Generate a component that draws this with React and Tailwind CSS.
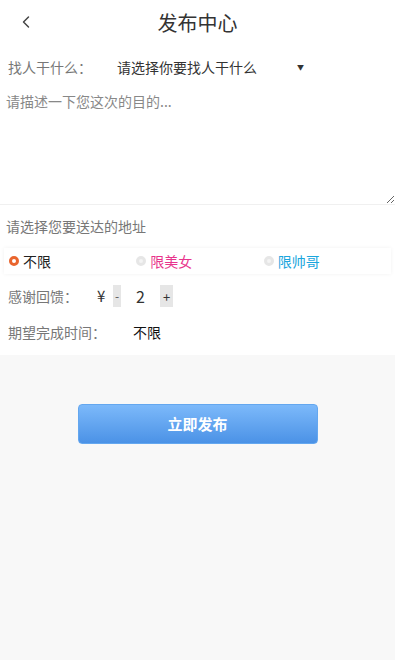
import { ChevronLeft } from 'lucide-react'

const font = { fontFamily: '"Microsoft YaHei", "Noto Sans CJK SC", sans-serif' }

function Radio({ label, color, checked }) {
  return (
    <label className="w-[130px] flex items-center gap-[4px]">
      <span
        className={`w-[10px] h-[10px] rounded-full border-[3px] ${checked ? 'border-[#e9652e] bg-white' : 'border-[#e6e6e6] bg-[#f4f4f4]'}`}
      />
      <span className={`text-[14px] ${color}`}>{label}</span>
    </label>
  )
}

export default function App() {
  return (
    <div className="w-[395px] min-h-[660px] bg-[#f8f8f8] text-[#333]" style={font}>
      <header className="h-[46px] bg-white relative flex items-center justify-center">
        <ChevronLeft className="absolute left-[16px] top-[12px] text-[#444]" size={20} strokeWidth={1.75} />
        <h1 className="text-[20px] text-[#333]">发布中心</h1>
      </header>

      <div className="bg-white">
        <div className="h-[42px] flex items-center pl-[8px]">
          <span className="w-[109px] text-[14px] text-[#777]">找人干什么：</span>
          <span className="w-[180px] text-[14px] text-[#333]">请选择你要找人干什么</span>
          <span className="text-[7px] text-[#333]">▼</span>
        </div>

        <textarea
          className="block w-full h-[117px] border-b border-[#f0f0f0] px-[6px] py-[3px] text-[14px] outline-none placeholder:text-[#888]"
          placeholder="请描述一下您这次的目的..."
        />

        <div className="h-[43px] flex items-center pl-[6px] text-[14px] text-[#777]">请选择您要送达的地址</div>

        <div className="h-[26px] mx-[4px] flex items-center pl-[5px] shadow-[0_0_4px_rgba(0,0,0,0.06)]">
          <Radio label="不限" color="text-[#222]" checked />
          <Radio label="限美女" color="text-[#e8348c]" />
          <Radio label="限帅哥" color="text-[#1ba6dd]" />
        </div>

        <div className="h-[36px] flex items-center pl-[8px] mt-[4px]">
          <span className="w-[89px] text-[14px] text-[#777]">感谢回馈：</span>
          <span className="text-[15px] text-[#333] w-[16px]">¥</span>
          <button className="w-[8px] h-[22px] bg-[#e6e6e6] text-[12px] text-[#555] leading-none">-</button>
          <span className="w-[39px] text-center text-[16px] text-[#333]">2</span>
          <button className="w-[13px] h-[22px] bg-[#e6e6e6] text-[13px] text-[#333] leading-none">+</button>
        </div>

        <div className="h-[38px] flex items-center pl-[8px] pb-[1px]">
          <span className="w-[125px] text-[14px] text-[#777]">期望完成时间：</span>
          <span className="text-[14px] text-[#111]">不限</span>
        </div>
        <div className="h-[3px]" />
      </div>

      <div className="pt-[49px] flex justify-center">
        <button className="w-[240px] h-[40px] rounded-[4px] border border-[#64a7ef] bg-gradient-to-b from-[#7cb9fa] to-[#4b92e6] text-white text-[15px] font-bold">
          立即发布
        </button>
      </div>
    </div>
  )
}
